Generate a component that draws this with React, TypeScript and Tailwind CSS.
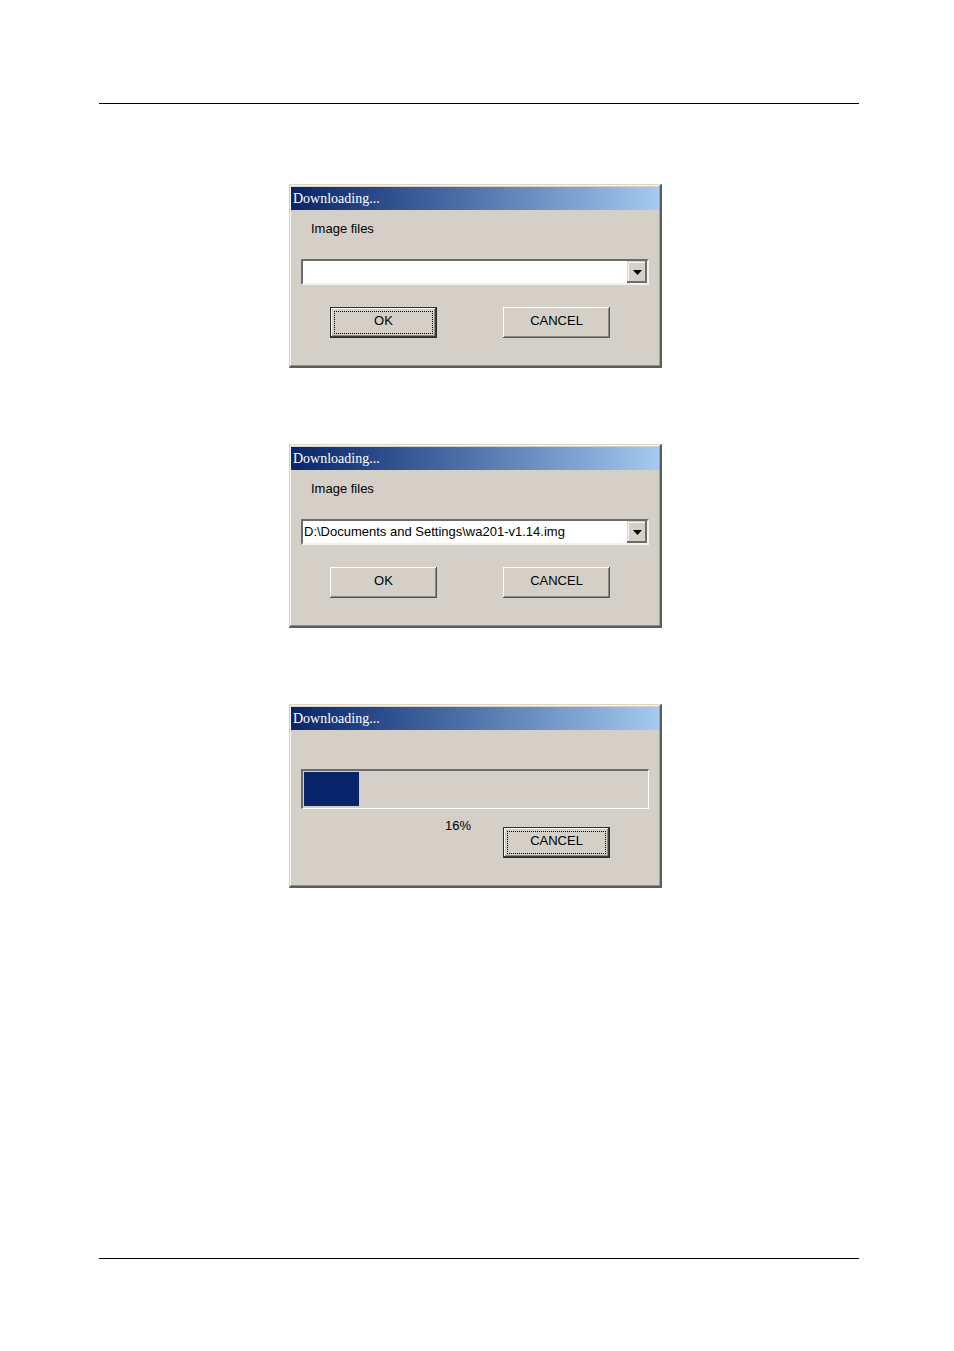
import type { ReactNode } from 'react'

function Dialog({ children }: { children: ReactNode }) {
  return (
    <section className="ml-[25%] w-full max-w-[373px] bg-[#d4d0c8] border-t border-t-[#d9d6c6] border-l border-l-[#d4d0c8] border-r-2 border-r-[#5c5c5c] border-b-2 border-b-[#5c5c5c]">
      <div className="border-t border-l border-[#f6f5f2] border-r border-r-[#a5a29c] border-b border-b-[#8c8a85] pt-px">
        <h2 className="h-[23px] px-[2px] bg-linear-to-r from-[#0a246a] to-[#a6caf0] text-white text-[14px] leading-[23px] font-['Liberation_Serif',serif]">
          Downloading...
        </h2>
        {children}
      </div>
    </section>
  )
}

function Button({ label, focused = false }: { label: string; focused?: boolean }) {
  return (
    <button
      type="button"
      className={
        focused
          ? 'w-[107px] h-[31px] pb-[3px] bg-[#d4d0c8] border border-[#2b2b2b] shadow-[inset_-1px_-1px_0_#3c3b39,inset_1px_1px_0_#ffffff,inset_-2px_-2px_0_#8c8a85] outline-1 outline-dotted outline-black -outline-offset-5'
          : 'w-[107px] h-[31px] pb-[3px] bg-[#d4d0c8] shadow-[inset_-1px_-1px_0_#55534f,inset_1px_1px_0_#ffffff,inset_-2px_-2px_0_#8c8a85]'
      }
    >
      {label}
    </button>
  )
}

function FileDialog({ id, file, okFocused = false }: { id: string; file: string; okFocused?: boolean }) {
  return (
    <Dialog>
      <div className="px-[10px] pt-[11px] pb-[27px]">
        <label htmlFor={id} className="block pl-[10px] leading-4">
          Image files
        </label>
        <div className="relative mt-[22px]">
          <select
            id={id}
            className="block w-full h-[26px] pl-px pr-6 appearance-none rounded-none bg-white border-2 border-t-[#6e6c68] border-l-[#6e6c68] border-r-[#f2f1ee] border-b-[#f2f1ee] text-black"
          >
            <option>{file}</option>
          </select>
          <span className="absolute top-[2px] right-[2px] w-5 h-[22px] flex items-center justify-center pointer-events-none bg-[#d4d0c8] shadow-[inset_-2px_-2px_0_#6e6c68,inset_1px_1px_0_#d4d0c8,inset_2px_2px_0_#f6f5f2]">
            <svg width="9" height="5" viewBox="0 0 9 5" aria-hidden="true">
              <path d="M0 0h9L4.5 5z" fill="#000" />
            </svg>
          </span>
        </div>
        <div className="mt-[22px] pl-[29px] pr-[39px] flex justify-between">
          <Button label="OK" focused={okFocused} />
          <Button label="CANCEL" />
        </div>
      </div>
    </Dialog>
  )
}

function ProgressDialog({ percent }: { percent: number }) {
  return (
    <Dialog>
      <div className="px-[10px] pt-[39px] pb-[27px]">
        <div
          role="progressbar"
          aria-label="Downloading"
          aria-valuenow={percent}
          className="h-10 p-px border-t-2 border-l-2 border-r border-b border-t-[#6e6c68] border-l-[#6e6c68] border-r-white border-b-white"
        >
          <div className="h-[34px] bg-[#0a246a]" style={{ width: `${percent}%` }} />
        </div>
        <div className="flex justify-end gap-8 pr-[39px]">
          <span className="pt-[9px] leading-4">{percent}%</span>
          <div className="pt-[18px]">
            <Button label="CANCEL" focused />
          </div>
        </div>
      </div>
    </Dialog>
  )
}

function App() {
  return (
    <main className="min-h-screen flex flex-col pt-[103px] pb-[92px] pl-[99px] pr-[95px] bg-white text-black text-[13px] font-['Liberation_Sans',Arial,sans-serif]">
      <hr className="border-black" />
      <div className="flex flex-col gap-[76px] pt-20">
        <FileDialog id="image-empty" file="" okFocused />
        <FileDialog id="image-selected" file="D:\Documents and Settings\wa201-v1.14.img" />
        <ProgressDialog percent={16} />
      </div>
      <hr className="mt-auto border-black" />
    </main>
  )
}

export default App
